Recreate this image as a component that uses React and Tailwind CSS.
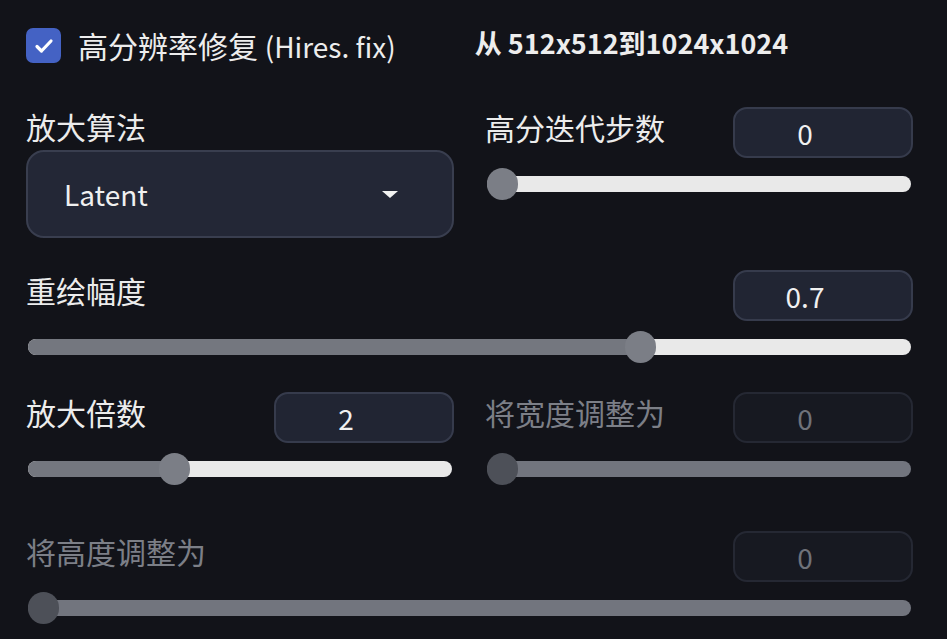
import { useState } from "react";

const font = { fontFamily: '"Noto Sans CJK SC", "Noto Sans", sans-serif' };

const Slider = ({ value, min, max, disabled }) => {
  const pct = (value - min) / (max - min);
  return (
    <div className="relative mt-[10px] h-[32px] mx-[2px]">
      <div
        className={`absolute left-0 right-0 top-[8px] h-[16px] rounded-full overflow-hidden ${
          disabled ? "bg-[#72757e]" : "bg-[#e9e9e9]"
        }`}
      >
        {!disabled && (
          <div
            className="h-full bg-[#74777f]"
            style={{ width: `calc(15px + (100% - 30px) * ${pct})` }}
          />
        )}
      </div>
      <div
        className={`absolute top-0 w-[31px] h-[32px] rounded-full ${
          disabled ? "bg-[#4d5058]" : "bg-[#7b7e86]"
        }`}
        style={{ left: `calc((100% - 30px) * ${pct})` }}
      />
    </div>
  );
};

const NumberBox = ({ value, disabled }) => (
  <div
    className={`w-[180px] h-[51px] rounded-[14px] border-2 flex items-center justify-center pr-[36px] text-[28px] ${
      disabled
        ? "bg-[#171921] border-[#252833] text-[#6f727a]"
        : "bg-[#212533] border-[#363b4c] text-[#f0f0f0]"
    }`}
  >
    {value}
  </div>
);

const SliderBlock = ({ label, value, min, max, disabled }) => (
  <div>
    <div className="flex items-center justify-between h-[51px]">
      <span
        className={`text-[30px] leading-[38px] pb-[12px] ${
          disabled ? "text-[#7c7f87]" : "text-[#ececec]"
        }`}
      >
        {label}
      </span>
      <NumberBox value={value} disabled={disabled} />
    </div>
    <Slider value={value} min={min} max={max} disabled={disabled} />
  </div>
);

export default function App() {
  const [enabled] = useState(true);

  return (
    <div
      className="w-[947px] h-[639px] overflow-hidden bg-[#121319] pl-[26px] pr-[34px] pt-[28px]"
      style={font}
    >
      <div className="flex items-center h-[35px]">
        <div className="w-[35px] h-[35px] rounded-[7px] bg-[#4462c4] flex items-center justify-center">
          {enabled && (
            <svg width="20" height="16" viewBox="0 0 20 16" fill="none">
              <path
                d="M3 8.5l4.5 4.5L17 3"
                stroke="white"
                strokeWidth="3.2"
                strokeLinecap="round"
                strokeLinejoin="round"
              />
            </svg>
          )}
        </div>
        <span className="ml-[17px] text-[30px] leading-[35px] text-[#ededed]">
          高分辨率修复 <span className="text-[28px]">(Hires. fix)</span>
        </span>
        <span className="ml-[79px] pb-[6px] text-[27px] leading-[35px] font-semibold text-[#ededed]">
          从 512x512到1024x1024
        </span>
      </div>

      <div className="grid grid-cols-2 gap-[31px] mt-[44px]">
        <div>
          <div className="text-[30px] leading-[38px] text-[#ececec]">放大算法</div>
          <div className="mt-[5px] h-[88px] rounded-[18px] border-2 border-[#393e4f] bg-[#232736] flex items-center justify-between pl-[36px] pr-[54px]">
            <span className="text-[28px] text-[#f0f0f0]">Latent</span>
            <svg width="16" height="7" viewBox="0 0 16 7">
              <path d="M0 0h16L8 7z" fill="#f2f2f2" />
            </svg>
          </div>
        </div>
        <SliderBlock label="高分迭代步数" value={0} min={0} max={150} />
      </div>

      <div className="mt-[32px]">
        <SliderBlock label="重绘幅度" value={0.7} min={0} max={1} />
      </div>

      <div className="grid grid-cols-2 gap-[31px] mt-[29px]">
        <SliderBlock label="放大倍数" value={2} min={1} max={4} />
        <SliderBlock label="将宽度调整为" value={0} min={0} max={2048} disabled />
      </div>

      <div className="mt-[46px]">
        <SliderBlock label="将高度调整为" value={0} min={0} max={2048} disabled />
      </div>
    </div>
  );
}
